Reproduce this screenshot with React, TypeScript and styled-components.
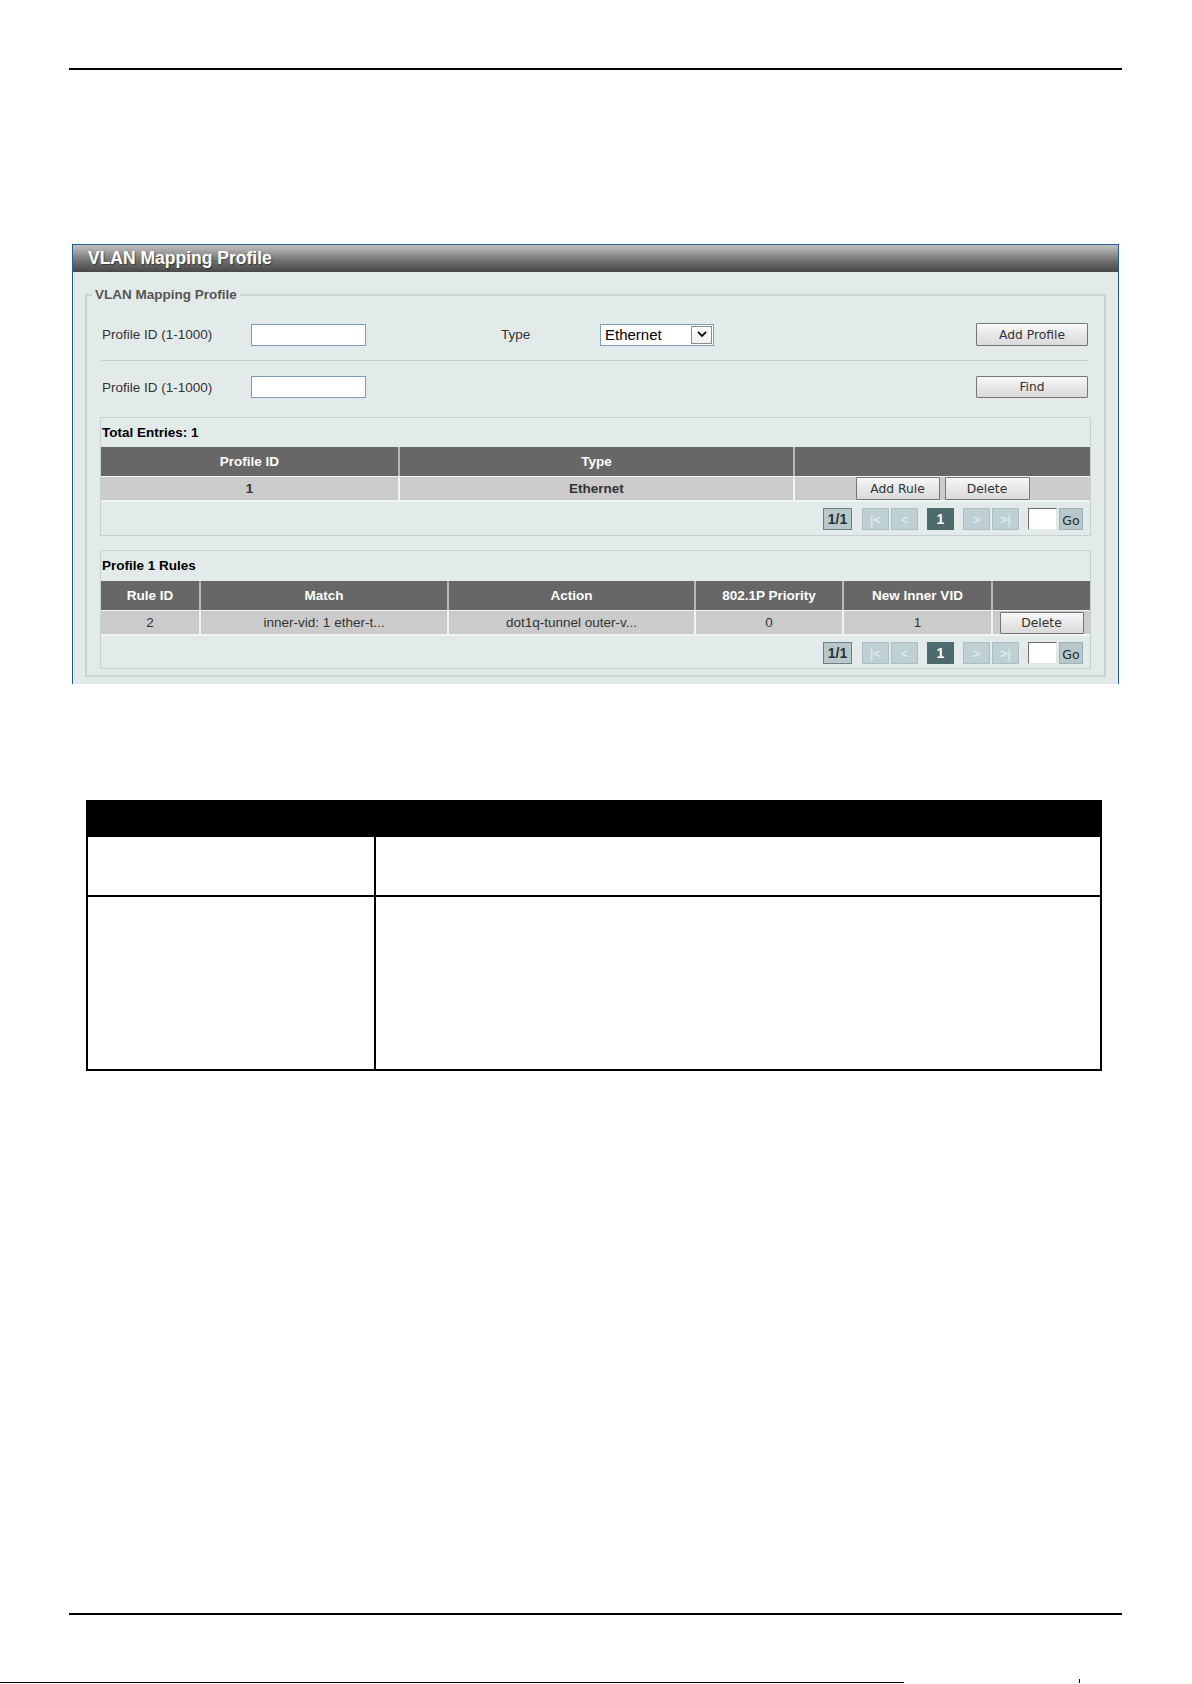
import React from "react";
import styled, { createGlobalStyle } from "styled-components";

const GlobalStyle = createGlobalStyle`
  html, body {
    margin: 0;
    padding: 0;
    background: #ffffff;
  }
  body {
    font-family: "Liberation Sans", Arial, sans-serif;
    color: #333;
  }
`;

const Sheet = styled.div`
  width: 1192px;
  height: 1684px;
  overflow: hidden;
  display: flex;
  flex-direction: column;
`;

const Content = styled.div`
  padding: 68px 70px 0 69px;
  display: flex;
  flex-direction: column;
`;

const Rule = styled.div<{ $gap?: number }>`
  height: 2px;
  background: #000;
  margin-top: ${(p) => p.$gap ?? 0}px;
`;

/* ---------- web panel ---------- */

const Panel = styled.section`
  margin: 174px 3px 0 3px;
  border: 1px solid #1d5f96;
  border-bottom: none;
  background: #e3ebea;
  display: flex;
  flex-direction: column;
`;

const TitleBar = styled.h2`
  margin: 0;
  height: 27px;
  line-height: 26px;
  padding-left: 15px;
  background: linear-gradient(
    to bottom,
    #c2c2c2 0%,
    #a0a0a0 25%,
    #6e6e6e 60%,
    #484848 100%
  );
  color: #ffffff;
  font-family: "Liberation Sans", Arial, sans-serif;
  font-size: 17.5px;
  font-weight: bold;
  text-shadow: 1px 1px 1px rgba(0, 0, 0, 0.45);
`;

const PanelBody = styled.div`
  padding: 15px 12px 7px 12px;
`;

const Fieldset = styled.fieldset`
  margin: 0;
  padding: 20px 13px 6px 13px;
  border: 2px solid #c9d3d3;
  min-width: 0;
`;

const Legend = styled.legend`
  margin-left: -8px;
  padding: 0 3px;
  font-size: 13.5px;
  line-height: 16px;
  font-weight: bold;
  color: #555;
`;

const FormRow = styled.div<{ $cols: string; $h: number }>`
  display: grid;
  grid-template-columns: ${(p) => p.$cols};
  align-items: center;
  height: ${(p) => p.$h}px;
  padding: 0 3px 0 2px;
`;

const Label = styled.span`
  font-size: 13.5px;
  color: #333;
`;

const TextInput = styled.input`
  box-sizing: border-box;
  width: 115px;
  height: 22px;
  margin: 0;
  border: 1px solid #7f9db9;
  background: #fff;
  padding: 0 3px;
  font-family: "Liberation Sans", Arial, sans-serif;
  font-size: 13px;
`;

const SelectBox = styled.div`
  box-sizing: border-box;
  width: 114px;
  height: 22px;
  border: 1px solid #7f9db9;
  background: #fff;
  display: flex;
  align-items: center;
  justify-content: space-between;
  padding: 0 1px 0 4px;
  font-size: 15px;
  color: #000;
`;

const SelectArrow = styled.span`
  box-sizing: border-box;
  width: 21px;
  height: 18px;
  border: 1px solid #8c8c8c;
  background: linear-gradient(#ffffff, #f0f0f0);
  display: flex;
  align-items: center;
  justify-content: center;
`;

const Button = styled.button<{ $w: number; $h?: number }>`
  box-sizing: border-box;
  width: ${(p) => p.$w}px;
  height: ${(p) => p.$h ?? 23}px;
  margin: 0;
  padding: 1px 0 0 0;
  border: 1px solid #767676;
  border-radius: 1px;
  background: linear-gradient(#f8f8f8, #e6e6e6 55%, #dadada);
  color: #333;
  font-family: "DejaVu Sans", Tahoma, sans-serif;
  font-size: 12.3px;
  line-height: 1;
  cursor: pointer;
`;

const Separator = styled.hr`
  margin: 14px 3px 15px 1px;
  border: none;
  border-top: 1px solid #c3cccc;
  height: 0;
`;

/* ---------- result boxes ---------- */

const ResultBox = styled.div<{ $gap: number }>`
  margin-top: ${(p) => p.$gap}px;
  border: 1px solid #c6d0d0;
  display: flex;
  flex-direction: column;
`;

const BoxTitle = styled.div<{ $h: number }>`
  height: ${(p) => p.$h}px;
  line-height: ${(p) => p.$h}px;
  padding-left: 1px;
  font-size: 13.5px;
  font-weight: bold;
  color: #000;
`;

const Grid = styled.table`
  width: 989px;
  table-layout: fixed;
  border-collapse: separate;
  border-spacing: 0;
`;

const Th = styled.th`
  height: 29px;
  padding: 0;
  background: #676767;
  color: #fff;
  font-size: 13.5px;
  font-weight: bold;
  text-align: center;
  & + & {
    border-left: 2px solid #b8b8b8;
  }
`;

const Td = styled.td<{ $bold?: boolean }>`
  box-sizing: border-box;
  height: 26px;
  padding: 0;
  background: #cbcbcb;
  border-top: 1px solid #f1f4f4;
  border-bottom: 2px solid #f1f4f4;
  color: #333;
  font-size: 13.5px;
  font-weight: ${(p) => (p.$bold ? "bold" : "normal")};
  text-align: center;
  vertical-align: middle;
  & + & {
    border-left: 2px solid #f1f4f4;
  }
`;

const CellActions = styled.div`
  display: flex;
  justify-content: center;
  gap: 5px;
`;

const Pager = styled.div<{ $pt: number; $pb: number }>`
  display: flex;
  justify-content: flex-end;
  align-items: center;
  padding: ${(p) => p.$pt}px 7px ${(p) => p.$pb}px 0;
`;

type NavKind = "count" | "off" | "current" | "go";

const navColors: Record<NavKind, { bg: string; border: string; color: string }> = {
  count: { bg: "#b6c8ca", border: "#6c7f81", color: "#263233" },
  off: { bg: "#bfd0d2", border: "#abbec0", color: "#e9f0f0" },
  current: { bg: "#4d6a6c", border: "#4d6a6c", color: "#ffffff" },
  go: { bg: "#b6c8ca", border: "#9fb2b4", color: "#1e2526" },
};

const NavBox = styled.span<{ $kind: NavKind; $w: number; $ml: number }>`
  box-sizing: border-box;
  width: ${(p) => p.$w}px;
  height: 22px;
  margin-left: ${(p) => p.$ml}px;
  display: flex;
  align-items: center;
  justify-content: center;
  background: ${(p) => navColors[p.$kind].bg};
  border: 1px solid ${(p) => navColors[p.$kind].border};
  color: ${(p) => navColors[p.$kind].color};
  font-family: ${(p) =>
    p.$kind === "go" ? `"DejaVu Sans", Tahoma, sans-serif` : `"Liberation Sans", Arial, sans-serif`};
  font-size: ${(p) => (p.$kind === "go" ? "12.5px" : p.$kind === "off" ? "13px" : "14px")};
  font-weight: ${(p) => (p.$kind === "count" || p.$kind === "current" ? "bold" : "normal")};
  padding-top: ${(p) => (p.$kind === "go" ? "2px" : "0")};
`;

const PageInput = styled.input`
  box-sizing: border-box;
  width: 29px;
  height: 22px;
  margin: 0 0 0 9px;
  padding: 0;
  background: #fff;
  border-style: solid;
  border-width: 1px;
  border-color: #6f6f6f #e4e4e4 #e4e4e4 #6f6f6f;
`;

function Pagination({ pt, pb }: { pt: number; pb: number }) {
  return (
    <Pager $pt={pt} $pb={pb}>
      <NavBox $kind="count" $w={29} $ml={0}>1/1</NavBox>
      <NavBox $kind="off" $w={27} $ml={10}>|&lt;</NavBox>
      <NavBox $kind="off" $w={27} $ml={2}>&lt;</NavBox>
      <NavBox $kind="current" $w={27} $ml={9}>1</NavBox>
      <NavBox $kind="off" $w={27} $ml={9}>&gt;</NavBox>
      <NavBox $kind="off" $w={27} $ml={2}>&gt;|</NavBox>
      <PageInput type="text" />
      <NavBox $kind="go" $w={24} $ml={2}>Go</NavBox>
    </Pager>
  );
}

/* ---------- parameter description table ---------- */

const InfoTable = styled.table`
  width: 1016px;
  margin: 116px 0 0 17px;
  border-collapse: collapse;
  table-layout: fixed;
`;

const InfoHead = styled.th`
  height: 33px;
  padding: 0;
  background: #000;
  border: 2px solid #000;
`;

const InfoCell = styled.td<{ $h: number }>`
  height: ${(p) => p.$h}px;
  padding: 0;
  border: 2px solid #000;
  & + & {
    border-left: 1px solid #000;
  }
`;

/* ---------- sheet edge ---------- */

const PageEdge = styled.div`
  margin-top: auto;
  margin-bottom: 1px;
  display: flex;
  align-items: flex-end;
  height: 5px;
`;

const EdgeLine = styled.div`
  width: 904px;
  height: 1px;
  background: #000;
`;

const EdgeTick = styled.div`
  width: 1px;
  height: 4px;
  margin-left: 175px;
  background: #000;
`;

export default function App() {
  return (
    <>
      <GlobalStyle />
      <Sheet>
        <Content>
          <Rule />

          <Panel>
            <TitleBar>VLAN Mapping Profile</TitleBar>
            <PanelBody>
              <Fieldset>
                <Legend>VLAN Mapping Profile</Legend>

                <FormRow $cols="149px 115px 135px 99px 114px 1fr 112px" $h={23}>
                  <Label>Profile ID (1-1000)</Label>
                  <TextInput type="text" />
                  <span />
                  <Label>Type</Label>
                  <SelectBox>
                    <span>Ethernet</span>
                    <SelectArrow>
                      <svg width="10" height="7" viewBox="0 0 10 7">
                        <polyline
                          points="1,1 5,5 9,1"
                          fill="none"
                          stroke="#111"
                          strokeWidth="1.8"
                        />
                      </svg>
                    </SelectArrow>
                  </SelectBox>
                  <span />
                  <Button $w={112}>Add Profile</Button>
                </FormRow>

                <Separator />

                <FormRow $cols="149px 115px 1fr 112px" $h={22}>
                  <Label>Profile ID (1-1000)</Label>
                  <TextInput type="text" />
                  <span />
                  <Button $w={112} $h={22}>Find</Button>
                </FormRow>

                <ResultBox $gap={19}>
                  <BoxTitle $h={29}>Total Entries: 1</BoxTitle>
                  <Grid>
                    <colgroup>
                      <col style={{ width: 297 }} />
                      <col style={{ width: 395 }} />
                      <col style={{ width: 297 }} />
                    </colgroup>
                    <thead>
                      <tr>
                        <Th>Profile ID</Th>
                        <Th>Type</Th>
                        <Th />
                      </tr>
                    </thead>
                    <tbody>
                      <tr>
                        <Td $bold>1</Td>
                        <Td $bold>Ethernet</Td>
                        <Td>
                          <CellActions>
                            <Button $w={84}>Add Rule</Button>
                            <Button $w={85}>Delete</Button>
                          </CellActions>
                        </Td>
                      </tr>
                    </tbody>
                  </Grid>
                  <Pagination pt={6} pb={5} />
                </ResultBox>

                <ResultBox $gap={14}>
                  <BoxTitle $h={30}>Profile 1 Rules</BoxTitle>
                  <Grid>
                    <colgroup>
                      <col style={{ width: 98 }} />
                      <col style={{ width: 248 }} />
                      <col style={{ width: 247 }} />
                      <col style={{ width: 148 }} />
                      <col style={{ width: 149 }} />
                      <col style={{ width: 99 }} />
                    </colgroup>
                    <thead>
                      <tr>
                        <Th>Rule ID</Th>
                        <Th>Match</Th>
                        <Th>Action</Th>
                        <Th>802.1P Priority</Th>
                        <Th>New Inner VID</Th>
                        <Th />
                      </tr>
                    </thead>
                    <tbody>
                      <tr>
                        <Td>2</Td>
                        <Td>inner-vid: 1 ether-t...</Td>
                        <Td>dot1q-tunnel outer-v...</Td>
                        <Td>0</Td>
                        <Td>1</Td>
                        <Td>
                          <CellActions>
                            <Button $w={84} $h={22}>Delete</Button>
                          </CellActions>
                        </Td>
                      </tr>
                    </tbody>
                  </Grid>
                  <Pagination pt={6} pb={4} />
                </ResultBox>
              </Fieldset>
            </PanelBody>
          </Panel>

          <InfoTable>
            <colgroup>
              <col style={{ width: 288 }} />
              <col />
            </colgroup>
            <thead>
              <tr>
                <InfoHead />
                <InfoHead />
              </tr>
            </thead>
            <tbody>
              <tr>
                <InfoCell $h={58} />
                <InfoCell $h={58} />
              </tr>
              <tr>
                <InfoCell $h={172} />
                <InfoCell $h={172} />
              </tr>
            </tbody>
          </InfoTable>

          <Rule $gap={542} />
        </Content>

        <PageEdge>
          <EdgeLine />
          <EdgeTick />
        </PageEdge>
      </Sheet>
    </>
  );
}
